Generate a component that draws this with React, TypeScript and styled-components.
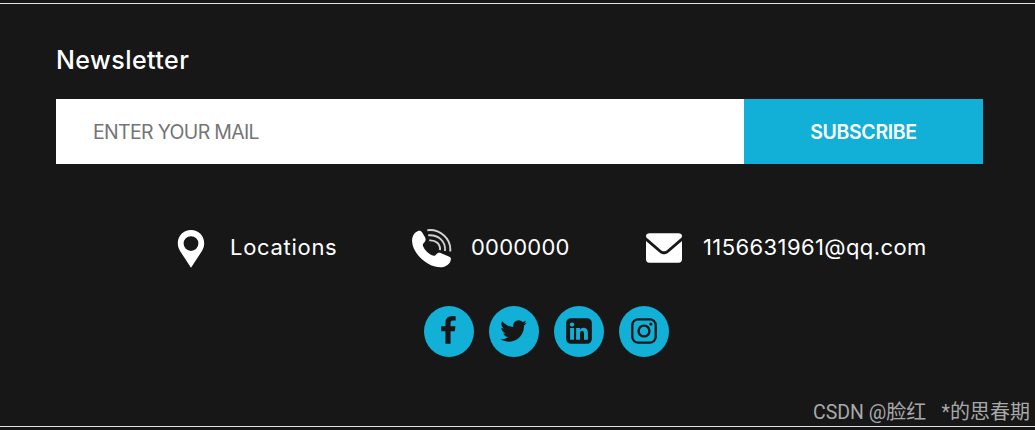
import React from 'react';
import styled, { createGlobalStyle } from 'styled-components';

const GlobalStyle = createGlobalStyle`
  * { box-sizing: border-box; }
  body { margin: 0; background: #171717; }
`;

const Footer = styled.footer`
  display: flex;
  flex-direction: column;
  height: 430px;
  padding-top: 3px;
  overflow: hidden;
  background: #171717;
  color: #fff;
  font-family: Inter, 'Noto Sans CJK SC', sans-serif;
`;

const Section = styled.section`
  display: flex;
  flex-direction: column;
  height: 424px;
  padding: 38px 52px 0 56px;
  border-top: 1px solid #e4e4e4;
  border-bottom: 1px solid #e4e4e4;
`;

const Title = styled.h2`
  margin: 0;
  height: 57px;
  font-size: 25px;
  line-height: 37px;
  font-weight: 500;
  letter-spacing: 0.45px;
`;

const Form = styled.form`
  display: flex;
  height: 65px;
`;

const MailInput = styled.input`
  width: 688px;
  padding: 1px 37px 0;
  border: 0;
  border-radius: 0;
  background: #fff;
  font: 400 19.5px Inter, sans-serif;
  letter-spacing: -0.68px;
  &::placeholder { color: #757575; opacity: 1; }
`;

const SubscribeButton = styled.button`
  width: 239px;
  padding: 1px 0 0;
  border: 0;
  background: #12afd6;
  color: #fff;
  font: 600 19.5px Inter, sans-serif;
  letter-spacing: -0.35px;
`;

const Contacts = styled.div`
  display: flex;
  height: 40px;
  margin: 65px 0 0 121px;
`;

const Contact = styled.div<{ $width: number; $gap: number; $spacing: number }>`
  display: flex;
  align-items: center;
  flex: none;
  width: ${(p) => p.$width}px;
  gap: ${(p) => p.$gap}px;
  font-size: 22px;
  line-height: 36px;
  letter-spacing: ${(p) => p.$spacing}px;
  white-space: nowrap;
  svg { flex: none; display: block; }
  span { padding-bottom: 4px; }
`;

const Socials = styled.div`
  display: flex;
  gap: 15px;
  margin: 37px 0 0 368px;
`;

const SocialLink = styled.a`
  display: flex;
  align-items: center;
  justify-content: center;
  width: 50px;
  height: 51px;
  padding-bottom: 1px;
  border-radius: 50%;
  background: #12afd6;
  color: #171717;
`;

const Watermark = styled.div`
  position: absolute;
  top: 397px;
  left: 813px;
  color: #a9a9a9;
  font: 400 20px/28px 'Noto Sans CJK SC', sans-serif;
  white-space: pre;
`;

const Handle = styled.span`
  font-family: Roboto, sans-serif;
  font-size: 19.5px;
`;

const Asterisk = styled(Handle)`
  letter-spacing: 0.2px;
`;

const PinIcon = () => (
  <svg width="28" height="40" viewBox="0 0 28 40" fill="#fff">
    <path fillRule="evenodd" d="M14 1C6.5 1 .8 6.8.8 14.2c0 3 .9 5.4 2.4 8L14 38.8l10.8-16.6c1.5-2.6 2.4-5 2.4-8C27.200 6.800 21.500 1 14 1Zm0 6.200a7.400 7.400 0 1 1 0 14.800 7.400 7.400 0 0 1 0-14.800Z" />
  </svg>
);

const PhoneIcon = () => (
  <svg width="40" height="40" viewBox="0 0 40 40">
    <path fill="#fff" d="M6.600 1.800C8 1.300 9.200 2 10.200 3.400l2.800 4.900c.9 1.700.8 3.200-.3 4.600-1.300 1.500-2.300 2.400-1.700 4.100 1.300 3.500 5 7.300 9 9.300 1.800.9 3.200.5 4.200-.9 1.200-1.600 2.900-2 4.900-1.200l7.700 3.300c2 .9 2.400 2 1.900 3.800-1 3.800-4.700 6.600-8.700 7C17.500 39.500.6 25.600.1 12.600-.1 7.600 2.200 3.200 6.600 1.800Z" />
    <g fill="none" stroke="#d2d2d2" strokeWidth="1.900">
      <path d="M15.300 1.200C28-.2 39.500 9.500 38.200 22.500" />
      <path d="M16.200 6.300c10-.9 17.700 6 16.800 15.700" />
      <path d="M17.200 11.400c6.600-.6 11.400 3.600 10.800 9.800" />
    </g>
  </svg>
);

const MailIcon = () => (
  <svg width="36" height="40" viewBox="0 0 36 40" fill="#fff">
    <path d="M3.500 4.300h29c2 0 3.500 1 3.500 2.600 0 1.200-.7 2-1.800 2.900L21.500 20.700c-2.600 2.100-4.500 2.100-7 0L1.800 9.800C.7 8.900 0 8.100 0 6.900c0-1.600 1.500-2.600 3.500-2.600Z" />
    <path d="M0 11.900 13.200 23.200c3.400 2.700 6.200 2.700 9.600 0L36 11.900v18.600c0 2-1.300 3.200-3.200 3.200H3.200C1.300 33.700 0 32.500 0 30.500Z" />
  </svg>
);

const socialIcons = [
  {
    name: 'Facebook',
    viewBox: '50 0 1792 1792',
    d: 'M1343 12v264h-157q-86 0-116 36t-30 108v189h293l-39 296h-254v759h-306v-759h-255v-296h255v-218q0-186 104-288.5t277-102.5q147 0 228 12z',
  },
  {
    name: 'Twitter',
    viewBox: '30 0 1792 1792',
    d: 'M1684 408q-67 98-162 167 1 14 1 42 0 130-38 259.5t-115.5 248.5-184.5 210.5-258 146-323 54.5q-271 0-496-145 35 4 78 4 225 0 401-138-105-2-188-64.5t-114-159.5q33 5 61 5 43 0 85-11-112-23-185.5-111.5t-73.5-205.5v-4q68 38 146 41-66-44-105-115t-39-154q0-88 44-163 121 149 294.5 238.5t371.5 99.5q-8-38-8-74 0-134 94.5-228.5t228.5-94.5q140 0 236 102 109-21 205-78-37 115-142 178 93-10 186-50z',
  },
  {
    name: 'LinkedIn',
    d: 'M365 1414h231v-694h-231v694zm246-908q-1-52-36-86t-93-34-94.500 34-36.500 86q0 51 35.500 85.500t92.500 34.500h1q59 0 95-34.500t36-85.500zm585 908h231v-398q0-154-73-233t-193-79q-136 0-209 117h2v-101h-231q3 66 0 694h231v-388q0-38 7-56 15-35 45-59.500t74-24.500q116 0 116 157v371zm468-998v960q0 119-84.500 203.500t-203.500 84.500h-960q-119 0-203.500-84.500t-84.500-203.500v-960q0-119 84.500-203.500t203.500-84.500h960q119 0 203.500 84.500t84.500 203.500z',
  },
  {
    name: 'Instagram',
    framed: true,
    d: 'M1152 896q0-106-75-181t-181-75-181 75-75 181 75 181 181 75 181-75 75-181zm138 0q0 164-115 279t-279 115-279-115-115-279 115-279 279-115 279 115 115 279zm108-410q0 38-27 65t-65 27-65-27-27-65 27-65 65-27 65 27 27 65z',
  },
];

export default function App() {
  return (
    <>
      <GlobalStyle />
      <Footer>
        <Section>
          <Title>Newsletter</Title>
          <Form>
            <MailInput type="email" placeholder="ENTER YOUR MAIL" />
            <SubscribeButton type="button">SUBSCRIBE</SubscribeButton>
          </Form>
          <Contacts>
            <Contact $width={235} $gap={25} $spacing={0.7}><PinIcon /><span>Locations</span></Contact>
            <Contact $width={234} $gap={19} $spacing={0.2}><PhoneIcon /><span>0000000</span></Contact>
            <Contact $width={290} $gap={21} $spacing={0.4}><MailIcon /><span>1156631961@qq.com</span></Contact>
          </Contacts>
          <Socials>
            {socialIcons.map((icon) => (
              <SocialLink key={icon.name} aria-label={icon.name}>
                <svg width="30" height="30" viewBox={icon.viewBox ?? '0 0 1792 1792'} fill="currentColor">
                  <path d={icon.d} />
                  {icon.framed && (
                    <rect x="197" y="197" width="1398" height="1398" rx="350" fill="none" stroke="currentColor" strokeWidth="138" />
                  )}
                </svg>
              </SocialLink>
            ))}
          </Socials>
        </Section>
        <Watermark><Handle>CSDN @</Handle>脸红<Asterisk>{'   *'}</Asterisk>的思春期</Watermark>
      </Footer>
    </>
  );
}
